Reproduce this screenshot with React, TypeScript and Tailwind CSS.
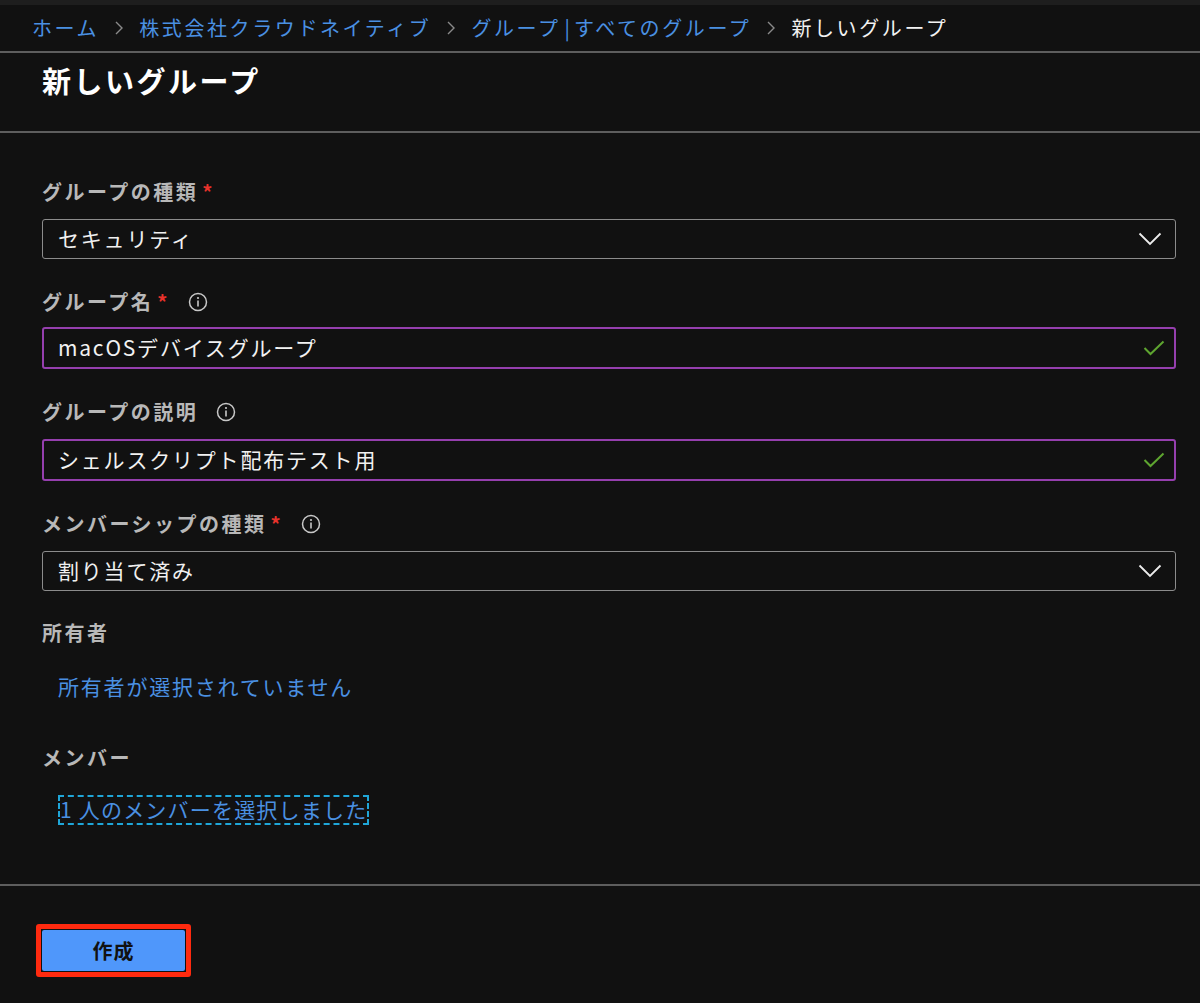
import React from "react";

const font = { fontFamily: '"Noto Sans CJK JP", "Noto Sans", sans-serif' };

function Chevron() {
  return (
    <svg width="10" height="16" viewBox="0 0 10 16" className="mx-[15px]">
      <path d="M2 2 L8 8 L2 14" fill="none" stroke="#8a8a8a" strokeWidth="1.4" />
    </svg>
  );
}

function Info() {
  return (
    <svg width="20" height="20" viewBox="0 0 20 20" className="ml-[18px]">
      <circle cx="10" cy="10" r="8.5" fill="none" stroke="#c8c8c8" strokeWidth="1.5" />
      <circle cx="10" cy="6" r="1.1" fill="#c8c8c8" />
      <path d="M10 8.6 V14.6" stroke="#c8c8c8" strokeWidth="1.6" />
    </svg>
  );
}

function Star() {
  return <span className="text-[#e8322b] ml-[4px]">*</span>;
}

function Label({ text, req, info }: { text: string; req?: boolean; info?: boolean }) {
  return (
    <div className="flex items-center h-[28px] text-[20px] font-bold text-[#b8b8b8] tracking-[2.5px]">
      <span>{text}</span>
      {req && <Star />}
      {info && <Info />}
    </div>
  );
}

function DownArrow() {
  return (
    <svg width="24" height="14" viewBox="0 0 24 14">
      <path d="M1.5 1.5 L12 12 L22.5 1.5" fill="none" stroke="#ededed" strokeWidth="1.8" />
    </svg>
  );
}

function Check() {
  return (
    <svg width="22" height="16" viewBox="0 0 22 16">
      <path d="M1.5 8 L7.5 14 L20.5 1.5" fill="none" stroke="#5ea530" strokeWidth="2" />
    </svg>
  );
}

function Select({ value }: { value: string }) {
  return (
    <div className="h-[40px] border border-[#8c8c8c] rounded-[3px] flex items-center justify-between pl-[15px] pr-[13px] text-[21px] text-[#f0f0f0] tracking-[1.8px]">
      <span>{value}</span>
      <DownArrow />
    </div>
  );
}

function TextInput({ value }: { value: string }) {
  return (
    <div className="h-[42px] border-2 border-[#953fae] rounded-[3px] flex items-center justify-between pl-[14px] pr-[9px] text-[21px] text-[#f2f2f2] tracking-[1.8px]">
      <span>{value}</span>
      <Check />
    </div>
  );
}

export default function App() {
  return (
    <div className="w-[1200px] h-[1003px] bg-[#111111] overflow-hidden" style={font}>
      <div className="h-[5px] bg-[#1e1e1e]" />
      <div className="h-[46px] flex items-center pl-[32px] text-[20px] tracking-[2.6px]">
        <span className="text-[#4a90e2]">ホーム</span>
        <Chevron />
        <span className="text-[#4a90e2]">株式会社クラウドネイティブ</span>
        <Chevron />
        <span className="text-[#4a90e2] flex items-center">
          <span>グループ</span>
          <span className="mx-[4px] tracking-normal">|</span>
          <span>すべてのグループ</span>
        </span>
        <Chevron />
        <span className="text-[#f2f2f2]">新しいグループ</span>
      </div>
      <div className="h-[2px] bg-[#5e5e5e]" />
      <div className="h-[78px] pl-[42px] pt-[9px]">
        <div className="text-[29px] leading-[36px] font-bold text-white tracking-[2.5px]">新しいグループ</div>
      </div>
      <div className="h-[2px] bg-[#5e5e5e]" />

      <div className="pl-[42px] pr-[24px] pt-[45px] h-[751px]">
        <Label text="グループの種類" req />
        <div className="mt-[13px]">
          <Select value="セキュリティ" />
        </div>

        <div className="mt-[29px]">
          <Label text="グループ名" req info />
        </div>
        <div className="mt-[11px]">
          <TextInput value="macOSデバイスグループ" />
        </div>

        <div className="mt-[29px]">
          <Label text="グループの説明" info />
        </div>
        <div className="mt-[13px]">
          <TextInput value="シェルスクリプト配布テスト用" />
        </div>

        <div className="mt-[29px]">
          <Label text="メンバーシップの種類" req info />
        </div>
        <div className="mt-[13px]">
          <Select value="割り当て済み" />
        </div>

        <div className="mt-[28px]">
          <Label text="所有者" />
        </div>
        <div className="mt-[25px] pl-[16px] h-[30px] flex items-center text-[21px] text-[#4a90e2] tracking-[1.8px]">
          所有者が選択されていません
        </div>

        <div className="mt-[42px]">
          <Label text="メンバー" />
        </div>
        <div className="mt-[23px] pl-[16px] flex">
          <span className="h-[30px] flex items-center border-2 border-dashed border-[#1fa6d8] text-[21px] text-[#4a90e2] tracking-[1.2px]">
            1 人のメンバーを選択しました
          </span>
        </div>
      </div>

      <div className="h-[2px] bg-[#5e5e5e]" />
      <div className="pl-[36px] pt-[38px]">
        <div className="w-[155px] h-[53px] border-[5px] border-[#ff2a0f] rounded-[3px] p-[1px] bg-[#111111]">
          <div className="w-full h-full bg-[#4f97fb] rounded-[2px] flex items-center justify-center text-[20px] font-bold text-[#111111] tracking-[1px]">
            作成
          </div>
        </div>
      </div>
    </div>
  );
}
